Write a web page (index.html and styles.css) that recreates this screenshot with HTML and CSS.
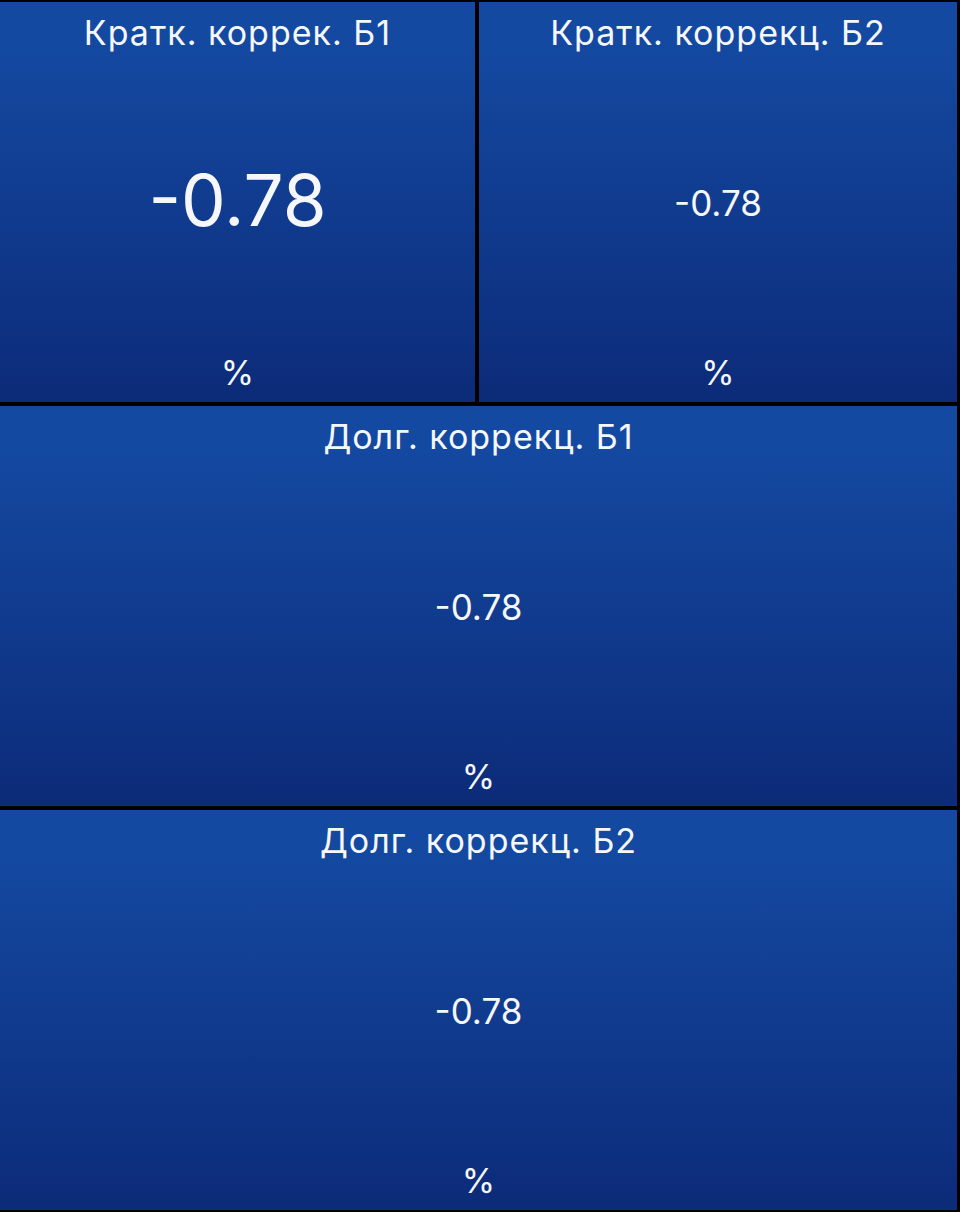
FILE: index.html
```html
<!DOCTYPE html>
<html lang="ru">
<head>
    <meta charset="UTF-8">
    <meta name="viewport" content="width=device-width, initial-scale=1.0">
    <title>Коррекция топлива</title>
    <link rel="stylesheet" href="styles.css">
</head>
<body>
    <div class="dashboard">
        <div class="gauge">
            <div class="gauge-title">Кратк. коррек. Б1</div>
            <div class="gauge-value big">-0.78</div>
            <div class="gauge-unit">%</div>
        </div>
        <div class="gauge">
            <div class="gauge-title">Кратк. коррекц. Б2</div>
            <div class="gauge-value">-0.78</div>
            <div class="gauge-unit">%</div>
        </div>
        <div class="gauge wide">
            <div class="gauge-title">Долг. коррекц. Б1</div>
            <div class="gauge-value">-0.78</div>
            <div class="gauge-unit">%</div>
        </div>
        <div class="gauge wide">
            <div class="gauge-title">Долг. коррекц. Б2</div>
            <div class="gauge-value">-0.78</div>
            <div class="gauge-unit">%</div>
        </div>
    </div>
</body>
</html>
```

FILE: styles.css
```css
:root {
    --panel-top: #1449a1;
    --panel-bottom: #0c2b79;
    --text-color: #f5f7fb;
}

body {
    margin: 0;
    background: #000;
    font-family: 'Inter', 'Noto Sans', sans-serif;
    height: 100vh;
    overflow: hidden;
}

.dashboard {
    display: grid;
    grid-template-columns: 475px 478px;
    grid-template-rows: 400px 400px 400px;
    gap: 4px;
    padding: 2px 3px 2px 0;
}

.gauge {
    display: flex;
    flex-direction: column;
    align-items: center;
    background: linear-gradient(180deg, var(--panel-top) 10%, var(--panel-bottom) 100%);
    color: var(--text-color);
}

.gauge.wide {
    grid-column: 1 / 3;
}

.gauge-title {
    font-size: 34px;
    letter-spacing: 1px;
    line-height: 40px;
    margin-top: 11px;
}

.gauge-value {
    flex: 1;
    display: flex;
    align-items: center;
    font-size: 35px;
}

.gauge-value.big {
    font-size: 71px;
    margin-top: -6px;
}

.gauge-unit {
    font-size: 34px;
    line-height: 40px;
    margin-bottom: 9px;
}
```
